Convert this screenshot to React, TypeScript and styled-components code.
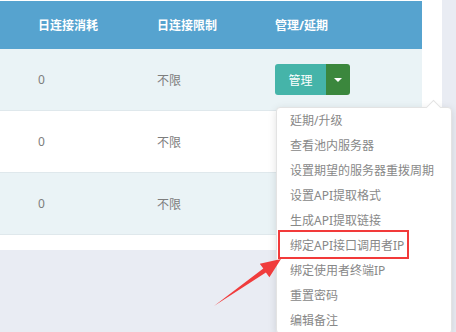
import React from 'react';
import styled, { createGlobalStyle } from 'styled-components';

const GlobalStyle = createGlobalStyle`
  html, body {
    margin: 0;
    padding: 0;
    background: #e9ecf3;
    font-family: "Noto Sans", "Noto Sans CJK SC", sans-serif;
  }
`;

const Page = styled.div`
  position: relative;
  width: 456px;
  height: 332px;
  overflow: hidden;
`;

const Panel = styled.div`
  width: 422px;
  height: 249px;
  padding: 1px 20px 0 0;
  background: #fff;
`;

const Table = styled.div`
  width: 422px;
`;

const Row = styled.div<{ $striped?: boolean }>`
  display: grid;
  grid-template-columns: 157px 118px 1fr;
  align-items: center;
  height: 61px;
  background: ${(p) => (p.$striped ? '#eaf3f6' : '#fff')};
  border-bottom: 1px solid #dfe8ec;
`;

const HeaderRow = styled(Row)`
  height: 48px;
  background: #56a3cf;
  border-bottom: none;
`;

const HeadCell = styled.div<{ $first?: boolean }>`
  padding-left: ${(p) => (p.$first ? '38px' : '0')};
  color: #fff;
  font-size: 12px;
  font-weight: bold;
  white-space: nowrap;
`;

const Cell = styled.div<{ $first?: boolean }>`
  padding-left: ${(p) => (p.$first ? '38px' : '0')};
  color: #7d7d7d;
  font-size: 12px;
  white-space: nowrap;
`;

const ActionCell = styled.div`
  display: flex;
  align-items: center;
`;

const ButtonGroup = styled.div`
  display: inline-flex;
  height: 31px;
  border-radius: 3px;
  overflow: hidden;
`;

const MainButton = styled.button`
  width: 51px;
  border: none;
  background: #45b4a9;
  color: #fff;
  font-family: inherit;
  font-size: 12px;
  padding: 0;
`;

const CaretButton = styled.button`
  width: 24px;
  border: none;
  background: #3b873d;
  display: flex;
  align-items: center;
  justify-content: center;
  padding: 0;

  &::after {
    content: '';
    border-left: 4px solid transparent;
    border-right: 4px solid transparent;
    border-top: 4px solid #fff;
  }
`;

const Menu = styled.ul`
  position: absolute;
  left: 276px;
  top: 107px;
  width: 174px;
  margin: 0;
  padding: 0;
  list-style: none;
  background: #fff;
  border: 1px solid #e3e3e3;
  border-radius: 4px;
  box-shadow: 0 2px 8px rgba(0, 0, 0, 0.12);

  &::before {
    content: '';
    position: absolute;
    top: -6px;
    left: 151px;
    width: 10px;
    height: 10px;
    background: #fff;
    border-left: 1px solid #e3e3e3;
    border-top: 1px solid #e3e3e3;
    transform: rotate(45deg);
  }
`;

const MenuItem = styled.li`
  position: relative;
  height: 25px;
  line-height: 25px;
  padding-left: 13px;
  color: #888;
  font-size: 12px;
  white-space: nowrap;
`;

const Highlight = styled.span`
  position: absolute;
  left: 1px;
  top: -3px;
  width: 127px;
  height: 25px;
  border: 2px solid #f23a3a;
`;

const Pointer = styled.svg`
  position: absolute;
  left: 0;
  top: 0;
  pointer-events: none;
`;

const rows = [0, 1, 2];

const items = [
  '延期/升级',
  '查看池内服务器',
  '设置期望的服务器重拨周期',
  '设置API提取格式',
  '生成API提取链接',
  '绑定API接口调用者IP',
  '绑定使用者终端IP',
  '重置密码',
  '编辑备注',
];

const HIGHLIGHTED = 5;

export default function App() {
  return (
    <Page>
      <GlobalStyle />
      <Panel>
        <Table>
          <HeaderRow>
            <HeadCell $first>日连接消耗</HeadCell>
            <HeadCell>日连接限制</HeadCell>
            <HeadCell>管理/延期</HeadCell>
          </HeaderRow>
          {rows.map((r) => (
            <Row key={r} $striped={r % 2 === 0}>
              <Cell $first>0</Cell>
              <Cell>不限</Cell>
              <ActionCell>
                {r === 0 && (
                  <ButtonGroup>
                    <MainButton>管理</MainButton>
                    <CaretButton />
                  </ButtonGroup>
                )}
              </ActionCell>
            </Row>
          ))}
        </Table>
      </Panel>
      <Menu>
        {items.map((text, i) => (
          <MenuItem key={text}>
            {i === HIGHLIGHTED && <Highlight />}
            {text}
          </MenuItem>
        ))}
      </Menu>
      {/* red pointer annotation */}
      <Pointer width="456" height="332" viewBox="0 0 456 332">
        <polygon
          points="214,306 263.3,268.6 259.8,263.7 281,259 269.4,277.3 265.9,272.4"
          fill="#f03c3c"
        />
      </Pointer>
    </Page>
  );
}
